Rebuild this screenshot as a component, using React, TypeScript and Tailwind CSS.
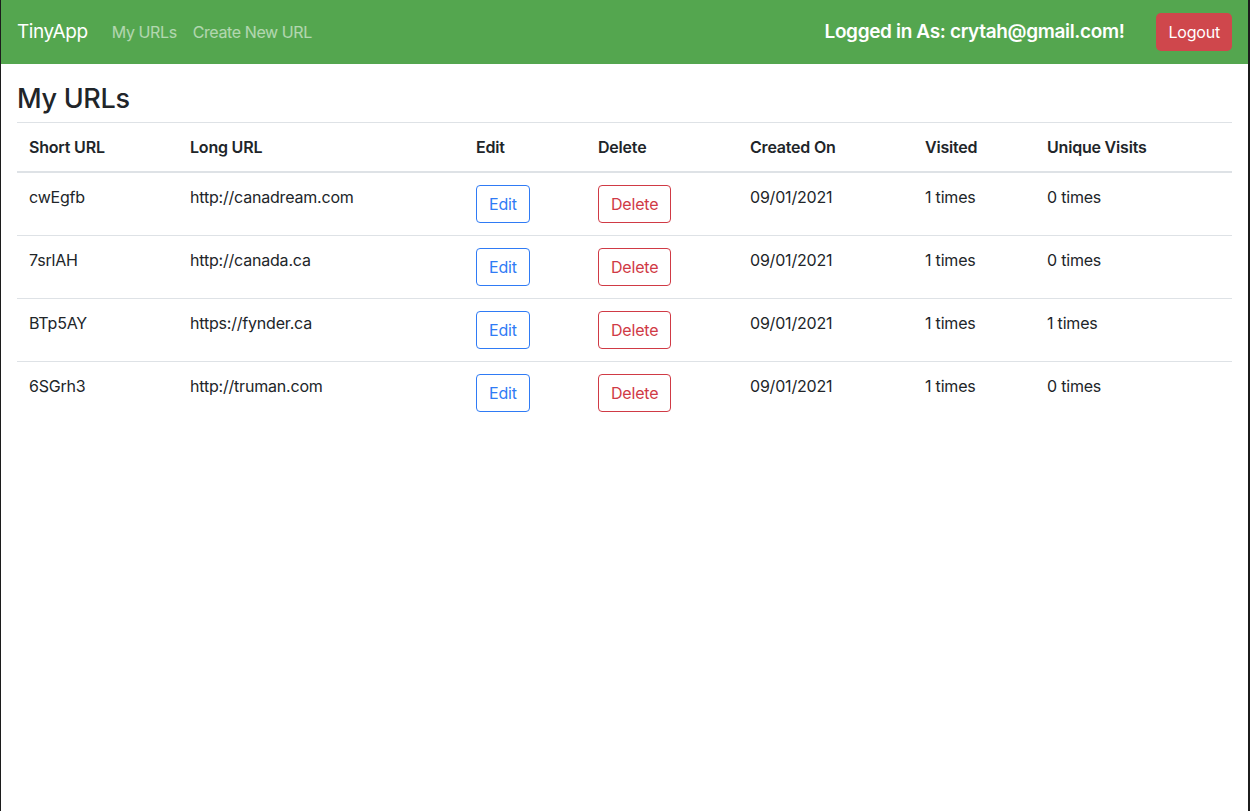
const urls = [
  { short: 'cwEgfb', long: 'http://canadream.com', created: '09/01/2021', visited: 1, unique: 0 },
  { short: '7srlAH', long: 'http://canada.ca', created: '09/01/2021', visited: 1, unique: 0 },
  { short: 'BTp5AY', long: 'https://fynder.ca', created: '09/01/2021', visited: 1, unique: 1 },
  { short: '6SGrh3', long: 'http://truman.com', created: '09/01/2021', visited: 1, unique: 0 },
]

const font = { fontFamily: 'Inter, "Liberation Sans", sans-serif' }

export default function App() {
  return (
    <div className="min-h-[811px] flex bg-[#1c1c1c]" style={font}>
      <div className="flex-1 ml-px mr-[3px] bg-white flex flex-col text-[#212529]">
        <nav className="h-16 bg-[#54a64f] flex items-center pl-4 pr-4">
          <span className="text-[19px] text-white mr-6 tracking-[-0.4px]">TinyApp</span>
          <a className="text-[16px] text-white/55 mr-4 tracking-[-0.4px]">My URLs</a>
          <a className="text-[16px] text-white/55 tracking-[-0.4px]">Create New URL</a>
          <div className="ml-auto flex items-center">
            <span className="text-[19px] font-semibold text-white mr-8 tracking-[-0.35px]">
              Logged in As: crytah@gmail.com!
            </span>
            <button className="h-[38px] px-3 rounded-[5px] bg-[#cf474c] text-white text-[16px] tracking-[-0.2px]">
              Logout
            </button>
          </div>
        </nav>

        <main className="px-4 pt-[18px]">
          <h3 className="text-[27px] font-medium leading-tight mb-[6px] tracking-[-0.3px]">My URLs</h3>
          <table className="w-[1215px] table-fixed border-collapse text-[16px] tracking-[-0.2px]">
            <colgroup>
              <col className="w-[161px]" />
              <col className="w-[286px]" />
              <col className="w-[122px]" />
              <col className="w-[152px]" />
              <col className="w-[175px]" />
              <col className="w-[122px]" />
              <col className="w-[197px]" />
            </colgroup>
            <thead>
              <tr className="border-t border-[#dee2e6] border-b-2 border-b-[#dee2e6] text-left">
                {['Short URL', 'Long URL', 'Edit', 'Delete', 'Created On', 'Visited', 'Unique Visits'].map((h) => (
                  <th key={h} className="font-semibold px-3 h-[50px] align-middle">
                    {h}
                  </th>
                ))}
              </tr>
            </thead>
            <tbody>
              {urls.map((u, i) => (
                <tr key={u.short} className={i < urls.length - 1 ? 'border-b border-[#dee2e6]' : ''}>
                  <td className="px-3 pt-[12px] pb-3 align-top">{u.short}</td>
                  <td className="px-3 pt-[12px] pb-3 align-top">{u.long}</td>
                  <td className="px-3 py-3 align-top">
                    <button className="h-[38px] px-3 rounded-[4px] border border-[#2f7bf5] text-[#2f7bf5]">Edit</button>
                  </td>
                  <td className="px-3 py-3 align-top">
                    <button className="h-[38px] px-3 rounded-[4px] border border-[#d03a45] text-[#d03a45]">Delete</button>
                  </td>
                  <td className="px-3 pt-[12px] pb-3 align-top">{u.created}</td>
                  <td className="px-3 pt-[12px] pb-3 align-top">{u.visited} times</td>
                  <td className="px-3 pt-[12px] pb-3 align-top">{u.unique} times</td>
                </tr>
              ))}
            </tbody>
          </table>
        </main>
      </div>
    </div>
  )
}
